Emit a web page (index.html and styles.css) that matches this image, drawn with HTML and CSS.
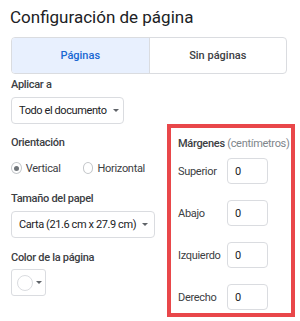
FILE: index.html
```html
<!DOCTYPE html>
<html lang="es">
<head>
<meta charset="utf-8">
<link rel="stylesheet" href="styles.css">
</head>
<body>
<div class="page">
  <h1 class="title">Configuración de página</h1>
  <div class="tabs">
    <div class="tab active">Páginas</div>
    <div class="tab">Sin páginas</div>
  </div>
  <div class="cols">
    <div class="left">
      <div class="label first">Aplicar a</div>
      <div class="select apply">Todo el documento<span class="caret"></span></div>
      <div class="label orient">Orientación</div>
      <div class="radios">
        <span class="radio checked"></span><span class="rlabel">Vertical</span>
        <span class="radio"></span><span class="rlabel">Horizontal</span>
      </div>
      <div class="label paper">Tamaño del papel</div>
      <div class="select papersel">Carta (21.6 cm x 27.9 cm)<span class="caret"></span></div>
      <div class="label color">Color de la página</div>
      <div class="colorbtn"><span class="swatch"></span><span class="caret"></span></div>
    </div>
    <div class="right">
      <div class="margins">
        <div class="mhead"><span class="mtitle">Márgenes</span> <span class="unit">(centímetros)</span></div>
        <div class="mrow"><span class="mlabel">Superior</span><span class="minput">0</span></div>
        <div class="mrow"><span class="mlabel">Abajo</span><span class="minput">0</span></div>
        <div class="mrow"><span class="mlabel">Izquierdo</span><span class="minput">0</span></div>
        <div class="mrow"><span class="mlabel">Derecho</span><span class="minput">0</span></div>
      </div>
    </div>
  </div>
</div>
</body>
</html>
```
FILE: styles.css
```css
* { box-sizing: border-box; }
html, body { margin: 0; padding: 0; background: #fff; }
body { font-family: Roboto, "Noto Sans", Arial, sans-serif; color: #202124; }
.page { width: 300px; height: 321px; padding: 5px 0 0 11px; overflow: hidden; }
.title { margin: 0 0 0 -1px; font-size: 17px; font-weight: 400; line-height: 24px; color: #202124; }
.tabs { display: flex; margin-top: 8px; width: 276px; height: 37px; border: 1px solid #dadce0; border-radius: 4px; overflow: hidden; }
.tab { flex: 1; display: flex; align-items: center; justify-content: center; font-size: 11px; font-weight: 500; color: #3c4043; }
.tab.active { background: #e8f0fe; color: #1967d2; border-right: 1px solid #dadce0; }
.cols { display: grid; grid-template-columns: 156px 128px; }
.label { font-size: 11px; line-height: 16px; font-weight: 500; color: #3c4043; white-space: nowrap; letter-spacing: -0.3px; }
.label.first { margin-top: 3px; }
.label.orient { margin-top: 11px; }
.label.paper { margin-top: 15px; }
.label.color { margin-top: 12px; }
.select { display: flex; align-items: center; margin-top: 4px; height: 27px; padding: 0 6px 0 7px; border: 1px solid #dadce0; border-radius: 4px; font-size: 11px; color: #202124; white-space: nowrap; letter-spacing: -0.4px; }
.select.apply { width: 113px; }
.select.papersel { width: 144px; }
.caret { display: inline-block; margin-left: 6px; width: 0; height: 0; border-left: 3px solid transparent; border-right: 3px solid transparent; border-top: 3px solid #5f6368; }
.radios { display: flex; align-items: center; margin-top: 9px; height: 16px; font-size: 11px; color: #3c4043; letter-spacing: -0.3px; }
.radio { width: 12px; height: 12px; border: 1px solid #c4c7ca; border-radius: 50%; display: inline-flex; align-items: center; justify-content: center; }
.radio.checked::after { content: ""; width: 5px; height: 5px; border-radius: 50%; background: #70757a; }
.rlabel { margin-left: 4px; margin-right: 22px; }
.colorbtn { display: flex; align-items: center; margin-top: 3px; width: 35px; height: 27px; padding-left: 5px; border: 1px solid #dadce0; border-radius: 3px; }
.swatch { width: 16px; height: 16px; border: 1px solid #dadce0; border-radius: 50%; background: #fff; }
.colorbtn .caret { margin-left: 3px; }
.margins { margin-top: 50px; height: 193px; border: 4px solid #e9474a; padding: 8px 0 0 7px; }
.mhead { font-size: 11px; line-height: 16px; white-space: nowrap; letter-spacing: -0.3px; }
.mtitle { font-weight: 500; color: #3c4043; }
.unit { color: #80868b; }
.mrow { display: flex; align-items: center; margin-top: 16px; height: 26px; font-size: 11px; color: #3c4043; letter-spacing: -0.3px; }
.mhead + .mrow { margin-top: 6px; }
.mlabel { width: 49px; }
.minput { width: 41px; height: 26px; border: 1px solid #dadce0; border-radius: 4px; padding-left: 7px; display: flex; align-items: center; color: #202124; }
```
